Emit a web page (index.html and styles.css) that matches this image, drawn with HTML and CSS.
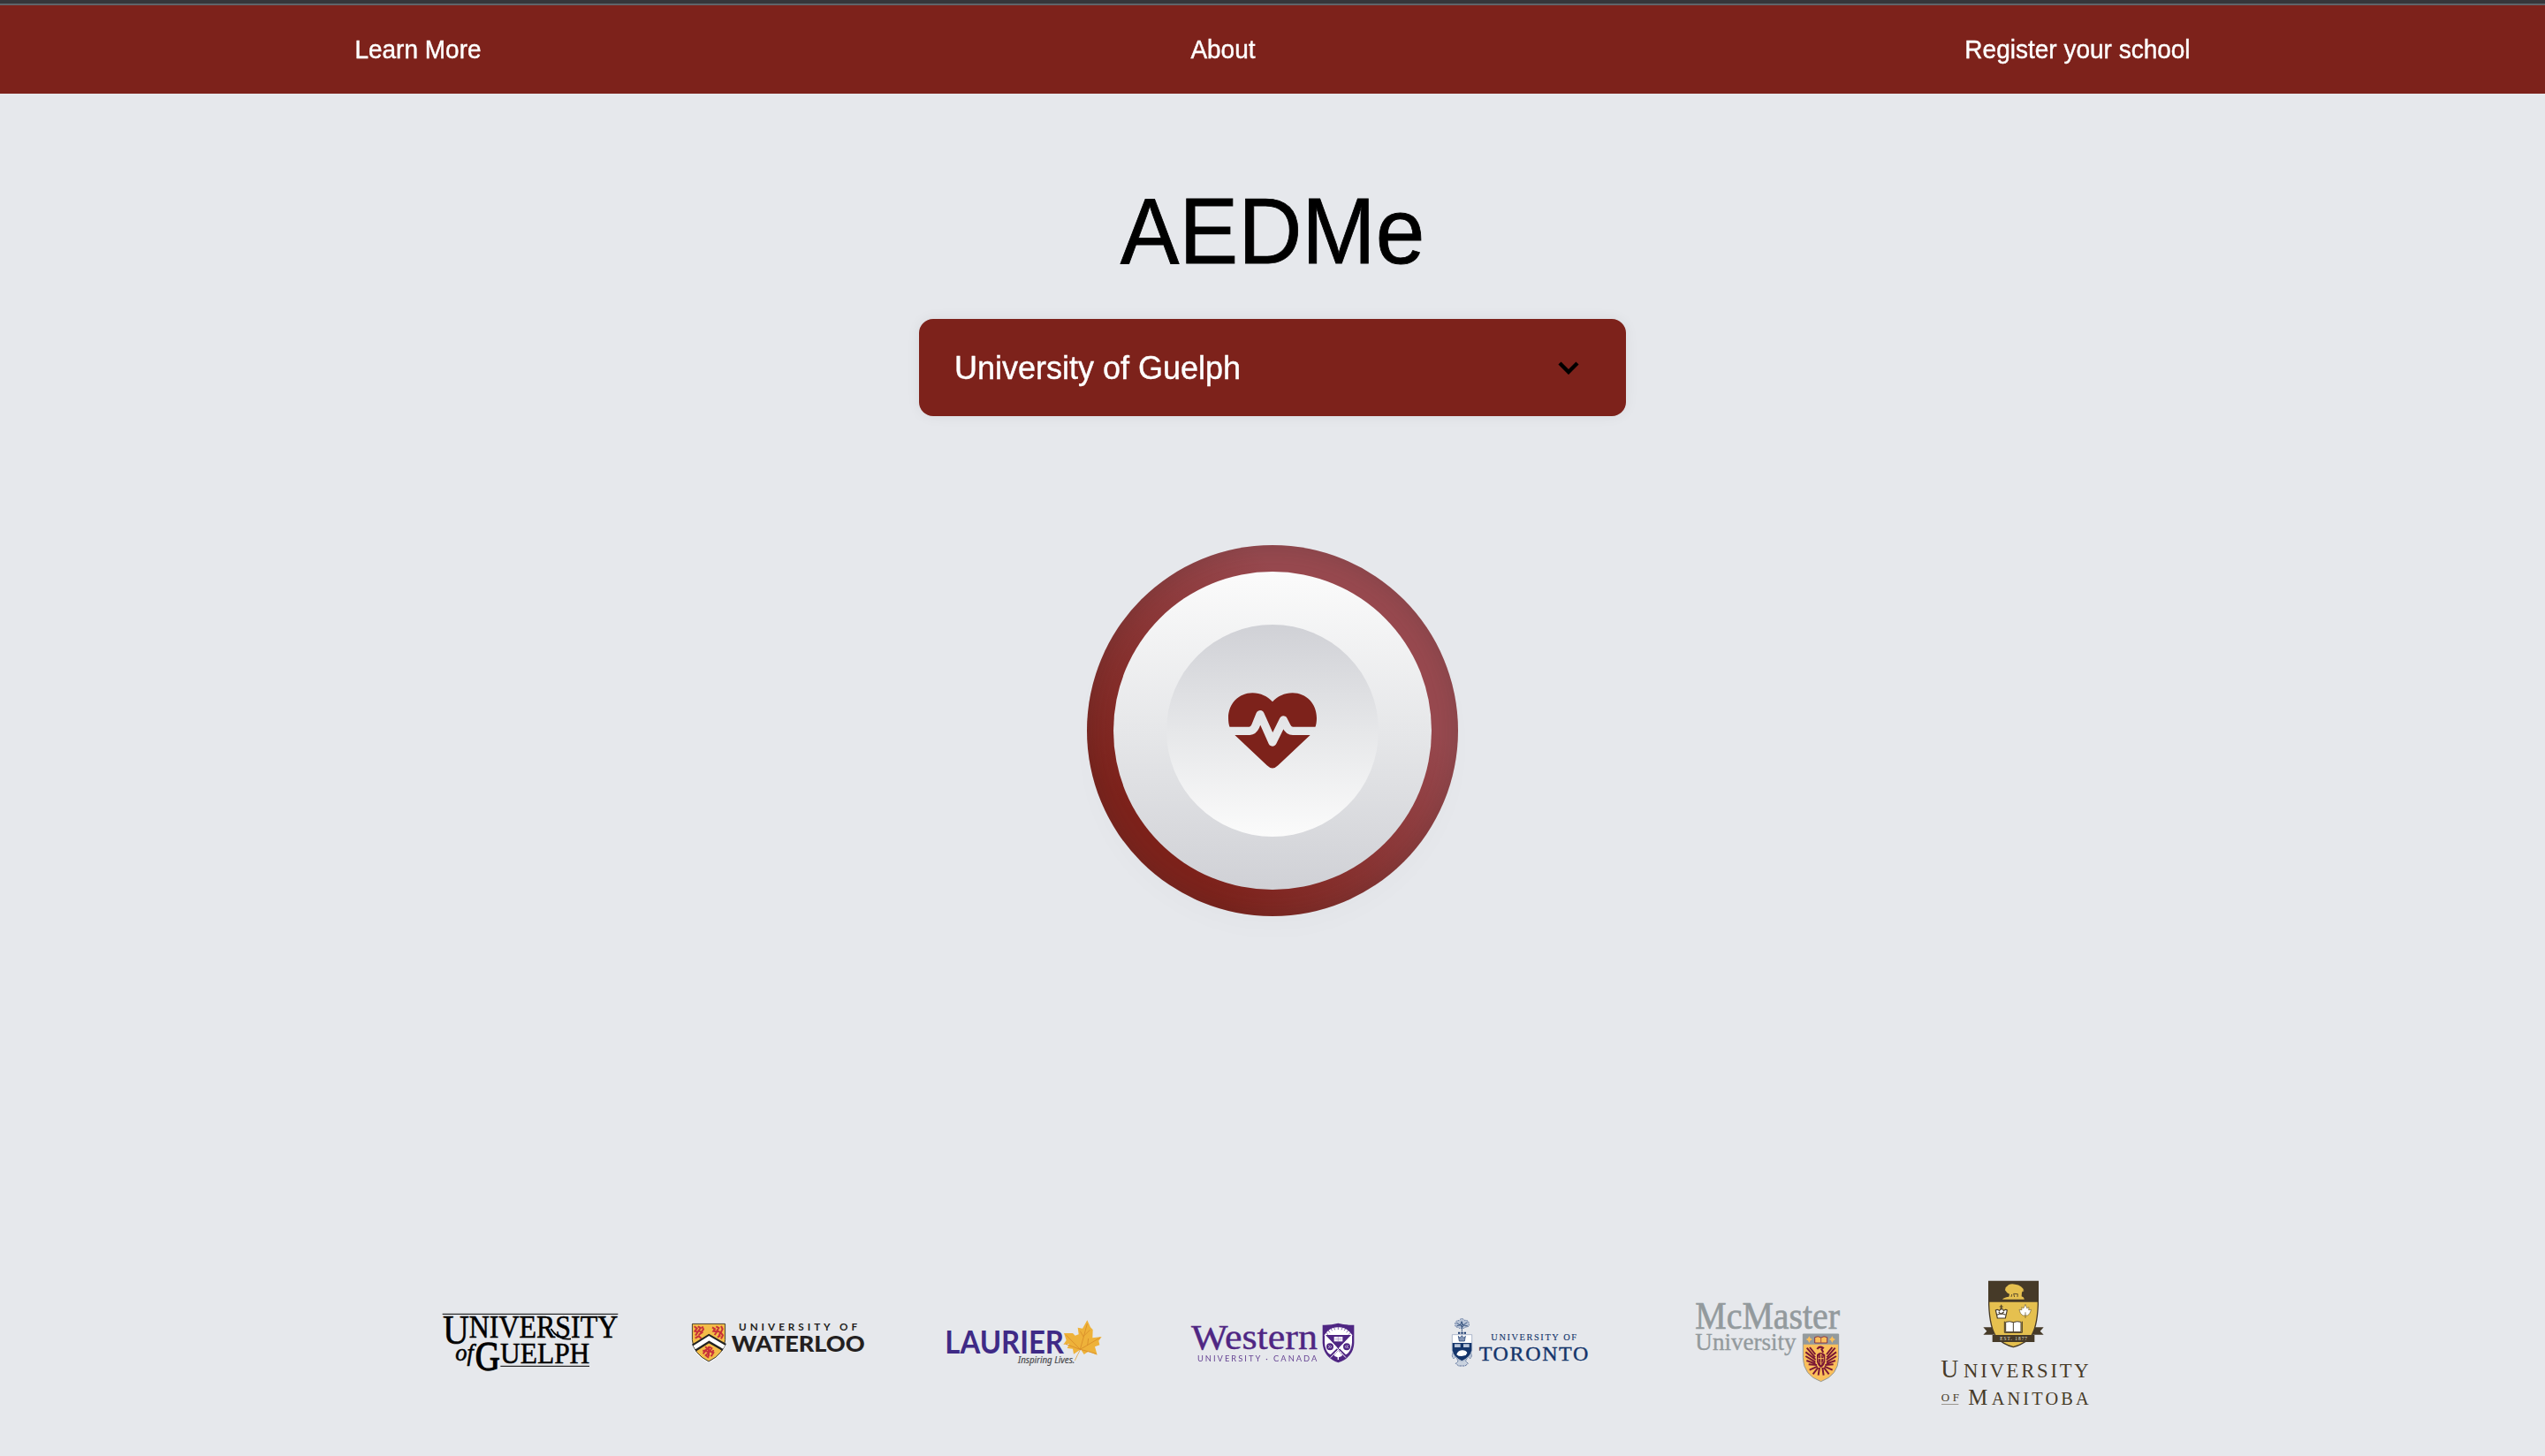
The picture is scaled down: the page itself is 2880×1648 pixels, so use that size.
FILE: index.html
```html
<!DOCTYPE html>
<html lang="en">
<head>
<meta charset="utf-8">
<title>AEDMe</title>
<link rel="stylesheet" href="styles.css">
</head>
<body>
<div class="topline"></div>
<nav class="nav">
  <a class="nav-link">Learn More</a>
  <a class="nav-link">About</a>
  <a class="nav-link">Register your school</a>
</nav>
<main class="main">
  <h1 class="title">AEDMe</h1>
  <div class="select">
    <span class="select-label">University of Guelph</span>
    <svg class="chevron" viewBox="0 0 24 15"><path d="M2 2 L12 12 L22 2" fill="none" stroke="#000" stroke-width="4.4"/></svg>
  </div>
  <div class="ring">
    <div class="disc">
      <div class="core">
        <svg class="heart" viewBox="540 555 300 256">
          <mask id="pulse">
            <rect x="530" y="545" width="320" height="280" fill="#fff"/>
            <path d="M525 684 H612 Q625 683 632 668 L648 628 L690 722 L727 647 L737 667 Q745 684 759 684 H860" fill="none" stroke="#000" stroke-width="28" stroke-linejoin="round"/>
          </mask>
          <path mask="url(#pulse)" fill="#7d221b" d="M690 585 C672 566 650 555 622 555 C576 555 540 591 540 640 C540 666 547 683 562 698 L671 801 Q690 820 709 801 L818 698 C833 683 840 666 840 640 C840 591 804 555 758 555 C730 555 708 566 690 585Z"/>
        </svg>
      </div>
    </div>
  </div>
</main>
<footer class="logos">
  <svg class="w230" height="120" viewBox="0 0 690 360">
    <g class="serif" fill="#000" stroke="#000" stroke-width="1.6">
      <path d="M32 82H628M229 259H531" stroke-width="3"/>
      <text x="33" y="184" font-size="140" textLength="90" lengthAdjust="spacingAndGlyphs">U</text>
      <text x="122" y="163" font-size="106" textLength="506" lengthAdjust="spacingAndGlyphs">NIVERSITY</text>
      <text x="76" y="240" font-size="82" font-style="italic" textLength="62" lengthAdjust="spacingAndGlyphs">of</text>
      <text x="143" y="273" font-size="140" stroke-width="4" textLength="84" lengthAdjust="spacingAndGlyphs">G</text>
      <text x="228" y="248" font-size="104" textLength="304" lengthAdjust="spacingAndGlyphs">UELPH</text>
      <path d="M400 132Q425 172 468 166" fill="none" stroke-width="5"/>
    </g>
  </svg>
  <svg class="w230" height="80" viewBox="0 0 690 240">
    <path d="M37 52H155V110Q153 160 96 187Q40 160 37 110Z" fill="#fff"/>
    <path d="M40 55H152V110Q150 157 96 183Q43 157 40 110Z" fill="#f3bd48" stroke="#3a352e" stroke-width="3"/>
    <g fill="none" stroke="#c8313a" stroke-width="6">
      <path d="M47 64l9 7-7 9 10 3-8 12M59 64l10 5-7 9 11 7-11 8M74 64l4 10-8 11M50 104l12-7 9 8"/>
      <path d="M108 67l9 6-5 7 12 2-8 11M121 64l9 5-6 10 12 5-5 12M138 63l5 10-6 12 7 9-6 12M126 101l10-7"/>
      <path d="M84 133l9 7-10 6 14 6-11 10 10 8M97 133l9 5-6 10 12 5-8 13M76 145l7 4-6 8M112 144l-5 13M96 132v34"/>
    </g>
    <path d="M46 137L97 105L149 135" fill="none" stroke="#222" stroke-width="27"/>
    <path d="M47 136L97 104L148 134" fill="none" stroke="#fff" stroke-width="14"/>
    <g fill="#231f20" font-family="Lato, sans-serif">
      <text x="198" y="79" font-size="35" font-weight="700" textLength="402">UNIVERSITY OF</text>
      <text x="173" y="149" font-size="73" font-weight="900" textLength="453" lengthAdjust="spacingAndGlyphs">WATERLOO</text>
    </g>
  </svg>
  <svg class="w200" height="80" viewBox="0 0 600 240">
    <text x="28" y="157" font-size="107" font-family="Lato, sans-serif" font-weight="700" fill="#3f2a86" textLength="404" lengthAdjust="spacingAndGlyphs">LAURIER</text>
    <text x="276" y="190" font-size="32" font-family="Noto Sans, sans-serif" font-style="italic" fill="#4a4a4c" stroke="#4a4a4c" stroke-width=".6" textLength="193" lengthAdjust="spacingAndGlyphs">Inspiring Lives.</text>
    <path d="M469 180Q478 160 486 146" stroke="#e3b35c" stroke-width="3" fill="none"/>
    <path d="M511 43L522 67L530 75L529 103L560 99L550 113L553 127L537 133L545 161L515 149L500 159L489 142L465 158L462 140L443 138L450 123L430 126L440 111L432 87L462 87L470 95L482 91L479 68L495 71Z" fill="#eeb23a"/>
    <path d="M486 146L511 55M487 142L438 92M487 142L555 102M488 142L542 157M487 142L438 124M499 100L487 80M501 95L520 76M512 128L515 105" stroke="#d78b29" stroke-width="2.5" fill="none"/>
  </svg>
  <svg class="w210" height="80" viewBox="0 0 630 240">
    <g fill="#4f2683">
      <text class="serif" x="39" y="140" font-size="121" stroke="#4f2683" stroke-width="1.2" textLength="429" lengthAdjust="spacingAndGlyphs">Western</text>
      <text x="60" y="182" font-size="28" font-family="Lato, sans-serif" opacity=".85" textLength="406">UNIVERSITY · CANADA</text>
      <path d="M485 59Q513 60 538 53Q565 60 592 59V120Q590 169 538 187Q488 169 485 120Z"/>
    </g>
    <path d="M492 92Q510 66 538 67Q567 66 585 92V119Q582 150 564 160L538 134L512 160Q494 150 492 119Z" fill="#fff"/>
    <path d="M495 93H582L538 139Z" fill="#4f2683"/>
    <path d="M496 84l8 8M503 76l7 9M512 70l6 9M523 66l4 10M538 64v11M553 66l-4 10M564 70l-6 9M573 76l-7 9M581 84l-8 8" stroke="#4f2683" stroke-width="2"/>
    <rect x="524" y="99" width="29" height="16" fill="#fff"/><path d="M527 104h23M527 109h23M538 99v16" stroke="#a994c4" stroke-width="2"/>
    <circle cx="510" cy="133" r="12" fill="#4f2683"/><circle cx="567" cy="133" r="12" fill="#4f2683"/>
    <path d="M504 128l6 5-6 5M511 128l4 5-4 5M573 128l-6 5 6 5M566 128l-4 5 4 5" stroke="#fff" stroke-width="2" fill="none"/>
    <path d="M492 94L564 170M585 94L512 170" stroke="#fff" stroke-width="3"/>
    <path d="M538 144l5 8 5-3-1 9 6-1-3 8-10 4v8h-4v-8l-10-4-3-8 6 1-1-9 5 3Z" fill="#fff"/>
  </svg>
  <svg class="w180" height="80" viewBox="0 0 540 240">
    <g class="serif" fill="#14356b" stroke="#14356b">
      <text x="172" y="112" font-size="31" stroke-width=".4" textLength="290">UNIVERSITY OF</text>
      <text x="131" y="180" font-size="72" stroke-width="1.2" textLength="371">TORONTO</text>
    </g>
    <g fill="none" stroke="#5d739b" stroke-width="3">
      <path d="M50 56q1-13 13-12 9-12 19-1 14-1 15 12 3 12-12 11-5 7-12 3-8 5-12-2-13 0-11-11Z" fill="#b8c3d6" stroke-dasharray="5 3"/>
      <path d="M55 52l12 8 5-13 5 13 14-10M56 62l13-3 4 8 8-7 12 3M73 50V82" stroke="#284675" stroke-width="2.5"/>
      <path d="M60 86h28" stroke="#14356b" stroke-width="6" stroke-dasharray="7 3"/>
      <path d="M45 151q-10 12 0 22l8-8 7 17-8 8 10 8h22l10-8-8-8 7-17 8 8q10-10 0-22" fill="#c9d2df" stroke-dasharray="8 2"/>
    </g>
    <path d="M40 92H107V145Q104 169 73 183Q42 169 40 145Z" fill="#fff" stroke="#8b9bb7" stroke-width="2"/>
    <path d="M41 120H106V145Q102 168 73 181Q44 168 41 145Z" fill="#14356b"/>
    <path d="M61 97l5 6 7-8 7 8 5-6-3 17H64Z" fill="#8495b5" stroke="#14356b" stroke-width="2"/>
    <path d="M48 124h20v11H48ZM78 124h20v11H78Z" fill="#b9c6da"/>
    <path d="M55 160q3-14 18-15 14-1 18 9l-5 8-14 3-10-1Z" fill="#fff"/>
  </svg>
  <svg class="w200" height="120" viewBox="0 0 600 360">
    <g class="serif" fill="#939a9d" stroke="#939a9d">
      <text x="55" y="131" font-size="134" stroke-width="2" textLength="491" lengthAdjust="spacingAndGlyphs">McMaster</text>
      <text x="55" y="203" font-size="80" stroke-width="1" textLength="343" lengthAdjust="spacingAndGlyphs">University</text>
    </g>
    <path d="M421 150H542V230Q541 290 482 311Q422 290 421 230Z" fill="#fbbf5b" stroke="#939a9d" stroke-width="3"/>
    <path d="M421 150H542V185H421Z" fill="#939a9d"/>
    <path d="M442 157l4 7 7 4-7 4-4 8-4-8-7-4 7-4ZM520 157l4 7 7 4-7 4-4 8-4-8-7-4 7-4Z" fill="#fbbf5b"/>
    <path d="M461 161q11-6 21 1 10-7 21-1v19h-42Z" fill="#fbbf5b" stroke="#7a1f3d" stroke-width="2.5"/><path d="M482 162v17" stroke="#7a1f3d" stroke-width="2"/>
    <g stroke="#7a1735" fill="none" stroke-width="6">
      <path d="M434 197L462 229M430 211L464 237M430 225L463 245M433 240L464 251M440 253L468 255M444 195L463 219M470 260L443 272M472 264L455 286M477 264L473 290"/>
      <path d="M530 197L502 229M534 211L500 237M534 225L501 245M531 240L500 251M524 253L496 255M520 195L501 219M494 260L521 272M492 264L509 286M487 264L491 290"/>
      <path d="M469 201q8-12 20-4l-5 5 6 10"/>
    </g>
    <path d="M468 220q13-14 28 0v24q-4 15-14 20-10-5-14-20Z" fill="#7a1735"/>
    <path d="M482 217v38M472 233h20" stroke="#fbbf5b" stroke-width="3"/><ellipse cx="482" cy="235" rx="9" ry="15" fill="none" stroke="#fbbf5b" stroke-width="1.5"/>
  </svg>
  <svg class="w200" height="160" viewBox="0 0 600 480">
    <path d="M193 187H230V212H193L205 200ZM398 187H360V212H398L386 200Z" fill="#463a28"/>
    <path d="M212 31H379V110Q376 190 352 222Q330 245 295 254Q260 245 239 222Q215 190 212 110Z" fill="#e5c04f" stroke="#463a28" stroke-width="4"/>
    <path d="M211 30H380V101H211Z" fill="#463a28"/>
    <path d="M258 92q4-6 22-9l2-9-8-4-7-9 2-9 10-9q10-6 22-2 12 1 20 8 8 5 7 13l-4 7-1 13q10 4 9 10Z" fill="#e5c04f"/>
    <path d="M288 84l2-9M299 84l-3-11 14 1-1 10" stroke="#463a28" stroke-width="2.5" fill="none"/><path d="M323 57q7-6 6 9" stroke="#e5c04f" stroke-width="2" fill="none"/>
    <path d="M235 129q7-5 13 2 3-8 6-8 5 0 8 8 7-7 12-2l-6 27h-27Z" fill="#fff" stroke="#463a28" stroke-width="3.5"/>
    <path d="M254 110v18M248 117h12M240 145q14-8 29 0M245 135l8 7 10-7" stroke="#463a28" stroke-width="3.5" fill="none"/>
    <path d="M336 109l5 13 7-3-1 9 9-1-5 12-7 8h-17l-8-8-4-12 9 1-1-9 7 3Z" fill="#fff" stroke="#756334" stroke-width="2"/><path d="M336 136v20" stroke="#756334" stroke-width="2.5"/>
    <path d="M269 169q14-4 26 1 13-5 26-1v34h-52Z" fill="#fff" stroke="#463a28" stroke-width="3"/><path d="M265 167v38h60v-38M295 170v33" fill="none" stroke="#463a28" stroke-width="3"/>
    <path d="M224 213H367V237H224Z" fill="#463a28"/>
    <g class="serif" fill="#463a28">
      <text x="250" y="230" font-size="16" fill="#e6e0cf" textLength="92">EST. 1877</text>
      <text x="49" y="357" font-size="88" textLength="60" lengthAdjust="spacingAndGlyphs">U</text>
      <text x="126" y="357" font-size="68" textLength="425">NIVERSITY</text>
      <text x="50" y="438" font-size="39" textLength="61">OF</text>
      <path d="M51 447H109V449H51Z" opacity=".7"/>
      <text x="142" y="449" font-size="77" textLength="66" lengthAdjust="spacingAndGlyphs">M</text>
      <text x="221" y="449" font-size="61" textLength="330">ANITOBA</text>
    </g>
  </svg>
</footer>
</body>
</html>
```
FILE: styles.css
```css
* { box-sizing: border-box; }
body {
  margin: 0;
  height: 1648px;
  display: flex;
  flex-direction: column;
  background: #e6e8ec;
  font-family: "Liberation Sans", Arial, sans-serif;
}
.topline { height: 6px; background: #35363a; border-bottom: 2px solid #5f6368; }
.nav {
  height: 100px;
  padding-top: 1px;
  display: flex;
  justify-content: space-around;
  align-items: center;
  background: #7d221b;
}
.nav-link { color: #fff; font-size: 28px; }
.nav-link,
.select-label { -webkit-text-stroke: .4px #fff; transform: scaleY(1.05); }
.main { display: flex; flex-direction: column; align-items: center; }
.title {
  margin: 99px 0 0;
  font-size: 100px;
  line-height: 116px;
  font-weight: 400;
  color: #000;
  -webkit-text-stroke: .8px #000;
  transform: scaleY(1.05);
  transform-origin: 0 93px;
}
.select {
  width: 800px;
  height: 110px;
  margin-top: 40px;
  padding: 0 53px 0 40px;
  display: flex;
  align-items: center;
  justify-content: space-between;
  border-radius: 16px;
  background: #7d221b;
  color: #fff;
  font-size: 36px;
  box-shadow: 0 0 16px rgba(0, 0, 0, .06);
}
.chevron { width: 24px; height: 15px; }
.ring {
  width: 420px;
  height: 420px;
  margin-top: 146px;
  padding: 30px;
  border-radius: 50%;
  background: linear-gradient(45deg, #7d221b 20%, #98494f 72%);
  box-shadow: inset 0 0 30px rgba(50, 50, 50, .22), 0 16px 26px rgba(0, 0, 0, .015);
}
.disc {
  height: 360px;
  padding: 60px;
  border-radius: 50%;
  background: linear-gradient(#fbfbfb, #e6e7e9 50%, #d0d1d6);
}
.core {
  height: 240px;
  display: flex;
  align-items: center;
  justify-content: center;
  border-radius: 50%;
  background: linear-gradient(#d0d1d6, #e6e7e9 50%, #fbfbfb);
}
.heart { width: 100px; height: 86px; }
.logos {
  height: 160px;
  margin-top: 403px;
  padding-left: 490px;
  display: grid;
  grid-template-columns: 280px 290px 275px 295px 270px 280px 200px;
  align-items: center;
}
.logos svg { overflow: visible; }
.serif { font-family: "Liberation Serif", "Times New Roman", serif; }
.w180 { width: 180px; }
.w200 { width: 200px; }
.w210 { width: 210px; }
.w230 { width: 230px; }
```
